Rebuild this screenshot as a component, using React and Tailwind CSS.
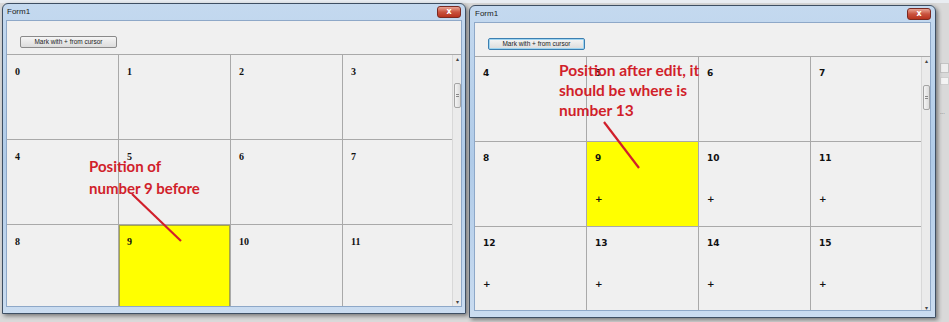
const red = '#d11f2b'

function CloseButton() {
  return (
    <div className="absolute right-[4px] top-[2px] flex h-[12px] w-[24px] items-center justify-center rounded-[3px] border border-[#7a2a22] bg-gradient-to-b from-[#e8a394] via-[#c9523e] to-[#b8321d] text-[8px] font-bold leading-none text-white [font-family:'DejaVu_Sans',sans-serif]">
      x
    </div>
  )
}

function Scrollbar() {
  return (
    <div className="relative flex w-[9px] shrink-0 flex-col items-center border-l border-[#d8d8d8] bg-[#ebebeb]">
      <span className="mt-[1px] text-[6px] leading-none text-[#444]">▴</span>
      <div className="absolute left-[1px] top-[28px] flex h-[25px] w-[7px] items-center justify-center rounded-[2px] border border-[#a4a4a4] bg-gradient-to-r from-[#f4f4f4] to-[#dcdcdc]">
        <span className="h-[3px] w-[3px] border-y border-[#888]" />
      </div>
      <span className="absolute bottom-[1px] text-[6px] leading-none text-[#444]">▾</span>
    </div>
  )
}

function Cell({ n, plus, yellow, outlined, serif }) {
  return (
    <div
      className={`relative h-[85px] w-[112px] shrink-0 border-b border-r border-[#a9a9a9] ${
        yellow ? 'bg-[#ffff00]' : 'bg-[#f0f0f0]'
      } ${outlined ? 'shadow-[inset_0_0_0_1px_#a6a640]' : ''}`}
    >
      <div
        className={`absolute left-[8px] top-[12px] font-bold leading-none text-[#111] ${
          serif
            ? "text-[10px] [font-family:'Liberation_Serif',serif]"
            : "text-[9px] [font-family:'DejaVu_Sans',sans-serif]"
        }`}
      >
        {n}
      </div>
      {plus && (
        <div className="absolute left-[8px] top-[53px] text-[9px] font-bold leading-none text-[#111] [font-family:'DejaVu_Sans',sans-serif]">
          +
        </div>
      )}
    </div>
  )
}

function FormWindow({ width, height, padX, rows, gridHeight, focused, serif, className }) {
  return (
    <div
      className={`relative flex shrink-0 flex-col rounded-t-[6px] border border-[#3e4f63] bg-gradient-to-b from-[#c4d9ef] via-[#b0cbe8] to-[#cadcf0] pb-[6px] shadow-[2px_2px_4px_rgba(0,0,0,0.45)] ${className}`}
      style={{ width, height, paddingLeft: padX, paddingRight: padX }}
    >
      <div className="flex h-[16px] shrink-0 items-center pl-[1px] text-[8px] text-[#1b1b1b] [font-family:'Liberation_Sans',sans-serif]">
        Form1
      </div>
      <CloseButton />
      <div className="flex min-h-0 flex-1 flex-col overflow-hidden border border-[#8ea8c8] bg-[#f0f0f0]">
        <div className="flex h-[33px] shrink-0 items-start pl-[13px] pt-[15px]">
          <div
            className={`flex h-[12px] w-[97px] items-center justify-center rounded-[2px] border bg-gradient-to-b from-[#f5f5f5] to-[#dcdcdc] text-[6.5px] leading-none text-[#222] [font-family:'Liberation_Sans',sans-serif] ${
              focused ? 'border-[#3c7fb1] shadow-[inset_0_0_0_1px_#9fd4f0]' : 'border-[#8a8a8a]'
            }`}
          >
            Mark with + from cursor
          </div>
        </div>
        <div className="flex shrink-0 border-t border-[#a9a9a9]" style={{ height: gridHeight }}>
          <div className="flex flex-col overflow-hidden">
            {rows.map((row, i) => (
              <div key={i} className="flex">
                {row.map((c) => (
                  <Cell key={c.n} {...c} serif={serif} />
                ))}
              </div>
            ))}
          </div>
          <Scrollbar />
        </div>
      </div>
    </div>
  )
}

const leftRows = [
  [{ n: 0 }, { n: 1 }, { n: 2 }, { n: 3 }],
  [{ n: 4 }, { n: 5 }, { n: 6 }, { n: 7 }],
  [{ n: 8 }, { n: 9, yellow: true, outlined: true }, { n: 10 }, { n: 11 }],
]

const rightRows = [
  [{ n: 4 }, { n: 5 }, { n: 6 }, { n: 7 }],
  [{ n: 8 }, { n: 9, yellow: true, plus: true }, { n: 10, plus: true }, { n: 11, plus: true }],
  [{ n: 12, plus: true }, { n: 13, plus: true }, { n: 14, plus: true }, { n: 15, plus: true }],
]

export default function App() {
  return (
    <div className="relative h-[322px] w-[949px] overflow-hidden bg-[#d9d9d9]">
      <div className="h-[3px] w-full bg-[#e9edf2]" />
      <div className="flex items-start">
        <FormWindow
          width={464}
          height={311}
          padX={3}
          rows={leftRows}
          gridHeight={252}
          serif
          className="ml-[2px]"
        />
        <FormWindow
          width={467}
          height={313}
          padX={4}
          rows={rightRows}
          gridHeight={256}
          focused
          className="ml-[3px] mt-[2px]"
        />
        <div className="ml-[1px] mt-[60px] flex flex-col gap-[4px] pl-[3px]">
          <div className="h-[10px] w-[9px] border border-[#c4c4c4] bg-[#eeeeee]" />
          <div className="h-[8px] w-[9px] border border-[#d0d0d0] bg-[#f4f4f4]" />
          <div className="mt-[20px] text-[6px] leading-none text-[#888]">...</div>
        </div>
      </div>

      <div
        className="absolute left-[89px] top-[155px] text-[15px] font-bold leading-[22px] [font-family:Lato,sans-serif]"
        style={{ color: red }}
      >
        Position of
        <br />
        number 9 before
      </div>
      <div
        className="absolute left-[559px] top-[60px] text-[15.5px] font-bold leading-[20px] [font-family:Lato,sans-serif]"
        style={{ color: red }}
      >
        Position after edit, it
        <br />
        should be where is
        <br />
        number 13
      </div>
      <svg className="pointer-events-none absolute inset-0" width="949" height="322">
        <line x1="132" y1="194" x2="181" y2="241" stroke={red} strokeWidth="2.2" />
        <line x1="604" y1="122" x2="639" y2="168" stroke={red} strokeWidth="2.2" />
      </svg>
    </div>
  )
}
